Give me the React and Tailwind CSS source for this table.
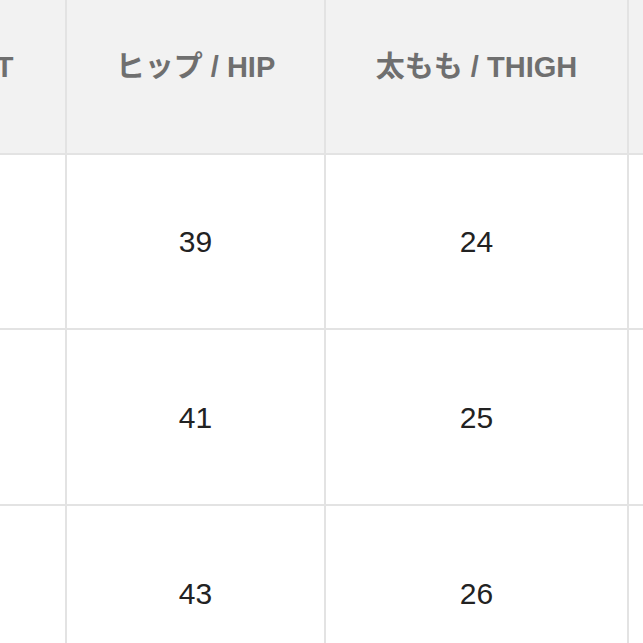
let headers = ["ウエスト / WAIST", "ヒップ / HIP", "太もも / THIGH", "股下 / INSEAM"]

let rows = [
	["28", "39", "24", "30"],
	["30", "41", "25", "31"],
	["32", "43", "26", "32"],
]

let App = () => {
	return (
		<div
			className="w-[643px] h-[643px] overflow-hidden bg-white"
			style={{ fontFamily: '"Liberation Sans", "Noto Sans CJK JP", sans-serif' }}
		>
			<div className="-ml-[270px] -mt-[20px] w-max grid grid-cols-[335px_257px_301px_260px] grid-rows-[173px_173px_174px_174px] gap-[2px] bg-[#e3e3e3]">
				{headers.map((h) => (
					<div
						key={h}
						className="bg-[#f2f2f2] flex items-center justify-center pt-[2px] text-[29px] font-bold text-[#6f6f6f] whitespace-nowrap"
					>
						{h}
					</div>
				))}
				{rows.map((r, i) =>
					r.map((v, j) => (
						<div
							key={i + "-" + j}
							className="bg-white flex items-center justify-center text-[30px] text-[#222222]"
						>
							{v}
						</div>
					))
				)}
			</div>
		</div>
	)
}

export default App
